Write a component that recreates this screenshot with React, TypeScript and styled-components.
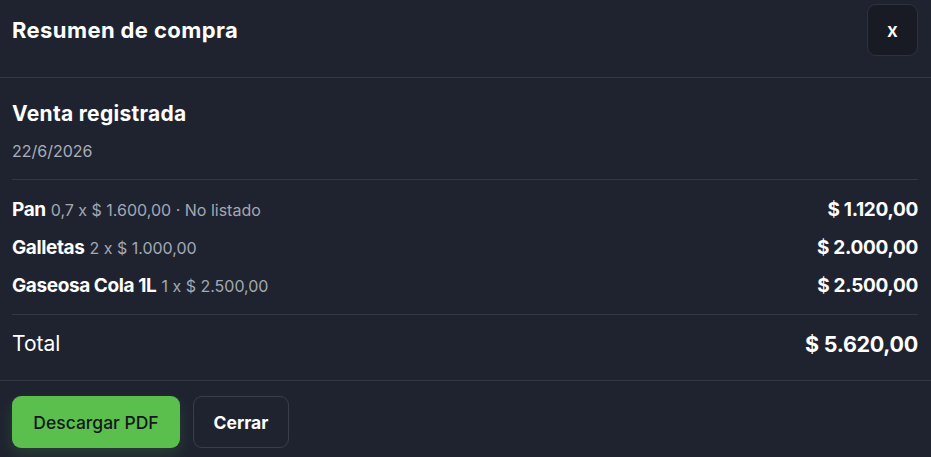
import styled, { createGlobalStyle } from 'styled-components';

const GlobalStyle = createGlobalStyle`
  html, body {
    margin: 0;
    padding: 0;
    background: #1f2330;
  }
  body {
    font-family: Inter, "Liberation Sans", sans-serif;
    color: #ffffff;
  }
`;

const Modal = styled.div`
  width: 931px;
  height: 457px;
  background: #1f2330;
  display: flex;
  flex-direction: column;
  overflow: hidden;

  & > * {
    flex-shrink: 0;
  }
`;

const Header = styled.header`
  display: flex;
  justify-content: space-between;
  align-items: flex-start;
  padding: 4px 13px 0 12px;
  height: 78px;
  box-sizing: border-box;
  border-bottom: 1px solid #343846;
`;

const Title = styled.h2`
  margin: 13px 0 0;
  font-family: Inter, "Liberation Sans", sans-serif;
  font-size: 22px;
  font-weight: 700;
  letter-spacing: 0.4px;
`;

const CloseButton = styled.button`
  width: 51px;
  height: 52px;
  border-radius: 9px;
  border: 1px solid #2e323d;
  background: #181b24;
  color: #ffffff;
  font-family: Inter, "Liberation Sans", sans-serif;
  font-size: 19px;
  font-weight: 600;
  cursor: pointer;
`;

const Body = styled.section`
  padding: 0 13px 0 12px;
`;

const SaleHead = styled.div`
  padding: 23px 0 18px;
  border-bottom: 1px solid #343846;
`;

const SaleTitle = styled.h3`
  margin: 0;
  font-family: Inter, "Liberation Sans", sans-serif;
  font-size: 21px;
  font-weight: 700;
  line-height: 26px;
  letter-spacing: 0.3px;
`;

const SaleDate = styled.div`
  margin-top: 14px;
  font-size: 16px;
  color: #a9aeb9;
  line-height: 20px;
`;

const Items = styled.ul`
  list-style: none;
  margin: 0;
  padding: 17px 0 16px;
  display: flex;
  flex-direction: column;
  gap: 13px;
  border-bottom: 1px solid #343846;
`;

const Item = styled.li`
  display: flex;
  justify-content: space-between;
  align-items: baseline;
  height: 25px;
  line-height: 25px;
`;

const ItemName = styled.span`
  font-size: 19px;
  font-weight: 700;
  letter-spacing: -0.4px;
`;

const ItemDetail = styled.span`
  font-size: 16px;
  color: #a3a8b3;
  margin-left: 5px;
`;

const Amount = styled.span<{ $big?: boolean }>`
  font-size: ${p => (p.$big ? '21.5px' : '19px')};
  font-weight: 700;
  letter-spacing: -0.3px;
`;

const TotalRow = styled.div`
  display: flex;
  justify-content: space-between;
  align-items: center;
  height: 65px;
  padding-bottom: 8px;
  box-sizing: border-box;
`;

const TotalLabel = styled.span`
  font-size: 21px;
  font-weight: 400;
`;

const Footer = styled.footer`
  border-top: 1px solid #343846;
  padding: 15px 12px;
  display: flex;
  gap: 13px;
`;

const Button = styled.button<{ $primary?: boolean }>`
  height: 52px;
  padding: 0;
  border-radius: 9px;
  font-family: Inter, "Liberation Sans", sans-serif;
  font-size: 17.5px;
  cursor: pointer;
  ${p =>
    p.$primary
      ? `
    width: 168px;
    background: #5bbf4d;
    border: none;
    color: #14181c;
    font-weight: 500;
    box-shadow: 0 6px 14px rgba(91, 191, 77, 0.18);
  `
      : `
    width: 96px;
    background: transparent;
    border: 1px solid #3a3e4a;
    color: #ffffff;
    font-weight: 700;
  `}
`;

const items = [
  { name: 'Pan', detail: '0,7 x $ 1.600,00 · No listado', amount: '$ 1.120,00' },
  { name: 'Galletas', detail: '2 x $ 1.000,00', amount: '$ 2.000,00' },
  { name: 'Gaseosa Cola 1L', detail: '1 x $ 2.500,00', amount: '$ 2.500,00' },
];

export default function App() {
  return (
    <>
      <GlobalStyle />
      <Modal>
        <Header>
          <Title>Resumen de compra</Title>
          <CloseButton>x</CloseButton>
        </Header>
        <Body>
          <SaleHead>
            <SaleTitle>Venta registrada</SaleTitle>
            <SaleDate>22/6/2026</SaleDate>
          </SaleHead>
          <Items>
            {items.map(it => (
              <Item key={it.name}>
                <span>
                  <ItemName>{it.name}</ItemName>
                  <ItemDetail>{it.detail}</ItemDetail>
                </span>
                <Amount>{it.amount}</Amount>
              </Item>
            ))}
          </Items>
          <TotalRow>
            <TotalLabel>Total</TotalLabel>
            <Amount $big>$ 5.620,00</Amount>
          </TotalRow>
        </Body>
        <Footer>
          <Button $primary>Descargar PDF</Button>
          <Button>Cerrar</Button>
        </Footer>
      </Modal>
    </>
  );
}
